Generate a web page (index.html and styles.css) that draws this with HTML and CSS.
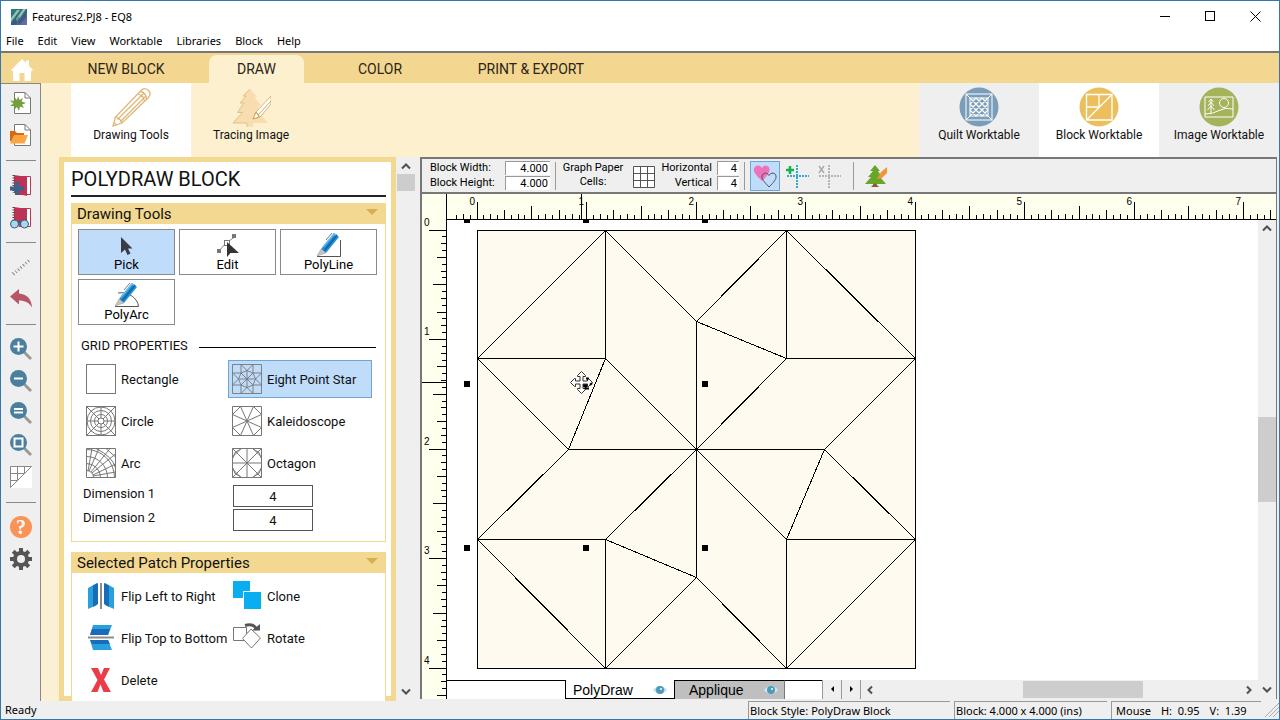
FILE: index.html
```html
<!DOCTYPE html>
<html lang="en">
<head>
<meta charset="utf-8">
<title>Features2.PJ8 - EQ8</title>
<link rel="stylesheet" href="styles.css">
</head>
<body>
<div class="window">
  <header class="titlebar">
    <svg class="app-icon" width="16" height="16" viewBox="0 0 16 16">
      <defs><linearGradient id="appg" x1="0" y1="0" x2="1" y2="1"><stop offset="0" stop-color="#2a7f86"/><stop offset=".5" stop-color="#35628c"/><stop offset="1" stop-color="#7a70ac"/></linearGradient></defs>
      <rect width="16" height="16" fill="url(#appg)"/>
      <path d="M0 9L6 1H9L0 13ZM5 10L12 0H15L6 13Z" fill="#8fc9a0"/>
      <path d="M1 16L8 7L9 11L15 3V8L8 16L7 12L4 16Z" fill="#2f5078" opacity=".5"/>
    </svg>
    <span class="title">Features2.PJ8 - EQ8</span>
    <div class="window-buttons">
      <button aria-label="Minimize"><svg width="11" height="11"><path d="M0 5.500H10" stroke="#000" fill="none"/></svg></button>
      <button aria-label="Maximize"><svg width="11" height="11"><rect x=".5" y=".5" width="9" height="9" stroke="#000" fill="none"/></svg></button>
      <button aria-label="Close"><svg width="11" height="11"><path d="M.5 .5L10.500 10.500M10.500 .5L.5 10.500" stroke="#000" fill="none"/></svg></button>
    </div>
  </header>
  <nav class="menubar">
    <button>File</button><button>Edit</button><button>View</button><button>Worktable</button><button>Libraries</button><button>Block</button><button>Help</button>
  </nav>
  <nav class="tabstrip">
    <button class="home" aria-label="Home"><svg width="22" height="22" viewBox="0 0 22 22"><path d="M11 0L15 4V1.500H18V7L22 11L20 12.500V22H13.500V14H8.500V22H2V12.500L0 11Z" fill="#fff"/></svg></button>
    <button class="tab tab-new">NEW BLOCK</button>
    <button class="tab tab-draw active">DRAW</button>
    <button class="tab tab-color">COLOR</button>
    <button class="tab tab-print">PRINT &amp; EXPORT</button>
  </nav>
  <div class="workspace">
    <aside class="sidebar">
      <button aria-label="New project"><svg width="22" height="24" viewBox="0 0 22 24"><path d="M4.500 1.500H15L20.500 7V22.500H4.500Z" fill="#fff" stroke="#777"/><path d="M15 1.500V7H20.500" fill="none" stroke="#777"/><path d="M8 5L9.500 9L13 7L11.500 10.500L16 12L12 13.500L14 17L10 15.500L9 20L7 16L4 19L4.500 15L0 15L3.500 12.500L0 9.500L4.500 10L4.500 6L7 9Z" fill="#72a03c"/></svg></button>
      <button aria-label="Open project"><svg width="22" height="24" viewBox="0 0 22 24"><path d="M4.500 1.500H15L20.500 7V22.500H4.500Z" fill="#fff" stroke="#777"/><path d="M15 1.500V7H20.500" fill="none" stroke="#777"/><path d="M0 8H5L7 10H14V18H0Z" fill="#d9690f"/><path d="M4 12H18L14.500 20.500H0Z" fill="#f9a541"/></svg></button>
      <hr>
      <button aria-label="Add to library"><svg width="22" height="24" viewBox="0 0 22 24"><path d="M9 3.500H20.500V21.500H9Z" fill="#fff" stroke="#bd3355"/><path d="M4 2L17 4V23L4 20Z" fill="#bd3355"/><path d="M3.500 2V20" stroke="#444" stroke-dasharray="1 1.500" stroke-width="2"/><path d="M5 9H9V13.500H14V17.500H9V22H5V17.500H0V13.500H5Z" fill="#38638f"/></svg></button>
      <button aria-label="View library"><svg width="22" height="24" viewBox="0 0 22 24"><path d="M9 3.500H20.500V21.500H9Z" fill="#fff" stroke="#bd3355"/><path d="M4 2L17 4V22L4 20Z" fill="#bd3355"/><path d="M3.500 2V16" stroke="#444" stroke-dasharray="1 1.500" stroke-width="2"/><circle cx="4.500" cy="19" r="4" fill="#a9d8ee" stroke="#36617f"/><circle cx="14.500" cy="19" r="4" fill="#a9d8ee" stroke="#36617f"/><path d="M8 17H11" stroke="#36617f" stroke-width="2"/></svg></button>
      <hr>
      <button aria-label="Ruler"><svg width="22" height="22" viewBox="0 0 22 22"><path d="M3 18L20 3" stroke="#888" stroke-width="4" stroke-dasharray="1 2.300" fill="none"/><path d="M2 15.500L19 1" stroke="#efefef" stroke-width="2.500"/></svg></button>
      <button aria-label="Undo"><svg width="22" height="22" viewBox="0 0 22 22"><path d="M0 8.500L9 1V5.500C17 6 21.500 11 22 19.500C19 14.500 15 12.500 9 12.500V16.500Z" fill="#b95569"/></svg></button>
      <hr>
      <button aria-label="Zoom in"><svg width="22" height="24" viewBox="0 0 22 24"><path d="M13 14L21 22" stroke="#999" stroke-width="3"/><circle cx="8.500" cy="9.500" r="8.500" fill="#4b7f9e"/><path d="M8.500 4.500V14.500M3.500 9.500H13.500" stroke="#fff" stroke-width="2"/></svg></button>
      <button aria-label="Zoom out"><svg width="22" height="24" viewBox="0 0 22 24"><path d="M13 14L21 22" stroke="#999" stroke-width="3"/><circle cx="8.500" cy="9.500" r="8.500" fill="#4b7f9e"/><path d="M4 9.500H13" stroke="#fff" stroke-width="2"/></svg></button>
      <button aria-label="Refresh zoom"><svg width="22" height="24" viewBox="0 0 22 24"><path d="M13 14L21 22" stroke="#999" stroke-width="3"/><circle cx="8.500" cy="9.500" r="8.500" fill="#4b7f9e"/><path d="M4 8H13M4 11.500H13" stroke="#fff" stroke-width="2"/></svg></button>
      <button aria-label="Fit to window"><svg width="22" height="24" viewBox="0 0 22 24"><path d="M13 14L21 22" stroke="#999" stroke-width="3"/><circle cx="8.500" cy="9.500" r="8.500" fill="#4b7f9e"/><rect x="4.500" y="5.500" width="8" height="8" fill="#4b7f9e" stroke="#fff" stroke-width="2"/></svg></button>
      <button aria-label="Paper"><svg width="22" height="24" viewBox="0 0 22 24"><rect y="1" width="22" height="22" fill="#fff"/><path d="M.5 1.500H21.500L.5 22.500ZM7.500 1.500V15.500M14.500 1.500V8.500M.5 8.500H14.500M.5 15.500H7.500" fill="none" stroke="#888"/></svg></button>
      <hr>
      <button aria-label="Help"><svg width="22" height="24" viewBox="0 0 22 24"><circle cx="11" cy="12" r="11" fill="#fa9355"/><text x="11" y="19" class="help-mark">?</text></svg></button>
      <button aria-label="Settings"><svg width="22" height="24" viewBox="0 0 22 24"><g fill="#555"><rect x="9" y="1" width="4" height="22"/><rect x="9" y="1" width="4" height="22" transform="rotate(45 11 12)"/><rect x="9" y="1" width="4" height="22" transform="rotate(90 11 12)"/><rect x="9" y="1" width="4" height="22" transform="rotate(135 11 12)"/><circle cx="11" cy="12" r="8"/></g><circle cx="11" cy="12" r="4" fill="#efefef"/></svg></button>
    </aside>
    <div class="content">
      <div class="ribbon">
        <button class="ribbon-btn active"><svg width="40" height="40" viewBox="0 0 40 40" fill="none" stroke="#dcb777" stroke-width="1.300"><path d="M2 39L4.500 30L30 3.500Q33 0 37 3Q41 7 37 11L11 36ZM4.500 30Q6 29.500 7 32Q10 32 9.500 34.500Q11.500 34.500 11 36M7 32L32.500 6.500M9.500 34.500L35 9M26.500 7Q29 6.500 30 9Q32.500 9 33 13.500M29 4.500Q35 5 35.500 12.500M2 39L5.500 38L3 35.500Z"/></svg><span>Drawing Tools</span></button>
        <button class="ribbon-btn"><svg width="40" height="40" viewBox="0 0 40 40"><path d="M19 2L26 9.500L23.500 10.500L30 18.500L27 20L33 27L31 29L37 36H22V40H16V36H2L11.500 25.500H6.500L13 16H9L15 9H12Z" fill="#f8ddb0"/><path d="M19 2L12 9H15L9 16H13L6.500 25.500H11.500L2 36H16V40" fill="none" stroke="#dfc088"/><path d="M22 32L25 25L40 9V17L29 30Z" fill="#fff" stroke="#dcb777"/><path d="M25 25L29 30M27 28L40 14M22 32L25 25L28 30Z" fill="none" stroke="#cda968"/></svg><span>Tracing Image</span></button>
        <div class="spacer"></div>
        <button class="ribbon-btn grey"><svg width="40" height="40" viewBox="0 0 40 40"><circle cx="20" cy="20" r="19.500" fill="#7a9db9"/><g fill="none" stroke="#fff"><rect x="7" y="7" width="26" height="26"/><rect x="11" y="11" width="18" height="18"/><path d="M7 7L11 11M33 7L29 11M7 33L11 29M33 33L29 29"/><path stroke-width="1.300" d="M11 17L17 11M11 23L23 11M11 29L29 11M17 29L29 17M23 29L29 23M23 11L29 17M17 11L29 23M11 11L29 29M11 17L23 29M11 23L17 29"/></g></svg><span>Quilt Worktable</span></button>
        <button class="ribbon-btn active"><svg width="40" height="40" viewBox="0 0 40 40"><circle cx="20" cy="20" r="19.500" fill="#ebbf5e"/><path d="M7.500 7.500H33V33H7.500ZM7.500 33L33 7.500M7.500 20H20V7.500" fill="none" stroke="#fff" stroke-width="1.300"/></svg><span>Block Worktable</span></button>
        <button class="ribbon-btn grey"><svg width="40" height="40" viewBox="0 0 40 40"><circle cx="20" cy="20" r="19.500" fill="#a4b35c"/><path d="M6 10H34V30H6ZM6 27Q14 27 20 23.500T34 22M12 26V12M12 12L9.500 15M12 12L14.500 15M12 15L9 19M12 15L15 19M12 19L8.500 23M12 19L15.500 23" fill="none" stroke="#fff"/><circle cx="25" cy="16" r="4.500" fill="none" stroke="#fff"/></svg><span>Image Worktable</span></button>
      </div>
      <div class="body">
        <div class="gutter"></div>
        <section class="panel">
          <h1>POLYDRAW BLOCK</h1>
          <div class="group">
            <h2>Drawing Tools<svg width="12" height="7"><path d="M0 0H12L6 6Z" fill="#d8ae55"/></svg></h2>
            <div class="tools">
              <button class="tool active"><svg width="24" height="26" viewBox="0 0 24 26"><path d="M6 6V22L10 18.500L12.500 24L15.500 22.500L13 17.500H17.500Z" fill="#3b3b44"/></svg><span>Pick</span></button>
              <button class="tool"><svg width="24" height="26" viewBox="0 0 24 26"><path d="M3 20L10 12L20 5" stroke="#888" fill="none"/><rect x="1" y="18" width="4" height="4" fill="#777"/><rect x="16" y="3" width="4" height="4" fill="#777"/><rect x="8.500" y="9.500" width="5" height="5" fill="#fff" stroke="#777"/><path d="M11 11V26L14.500 22H23Z" fill="#333"/></svg><span>Edit</span></button>
              <button class="tool"><svg width="26" height="26" viewBox="0 0 26 26"><path d="M1 25.500H24.500V9" stroke="#555" fill="none"/><path d="M5 18L18 2L23 6L10 22Z" fill="#2793d6"/><path d="M8 20L21 4" stroke="#126ba8" stroke-width="2"/><path d="M7 16L18 3L20 4" stroke="#66bdf0" stroke-width="1.500" fill="none"/><path d="M1 25L5 18L10 22Z" fill="#c3c3c8" stroke="#999" stroke-width=".5"/><path d="M10 9L16 2" stroke="#777"/></svg><span>PolyLine</span></button>
              <button class="tool"><svg width="26" height="26" viewBox="0 0 26 26"><path d="M1 25.500H24.500C24 18 15 10 4 12" stroke="#555" fill="none"/><path d="M5 18L18 2L23 6L10 22Z" fill="#2793d6"/><path d="M8 20L21 4" stroke="#126ba8" stroke-width="2"/><path d="M7 16L18 3L20 4" stroke="#66bdf0" stroke-width="1.500" fill="none"/><path d="M1 25L5 18L10 22Z" fill="#c3c3c8" stroke="#999" stroke-width=".5"/><path d="M10 9L16 2" stroke="#777"/></svg><span>PolyArc</span></button>
            </div>
            <h3>GRID PROPERTIES</h3>
            <div class="options">
              <button class="option"><svg width="30" height="30" viewBox="0 0 30 30"><rect x=".5" y=".5" width="29" height="29"/></svg>Rectangle</button>
              <button class="option active"><svg width="30" height="30" viewBox="0 0 30 30"><path d="M.5 .5H29.500V29.500H.5ZM.5 9H9V.5L15 6.500L21 .5V9H29.500L23.500 15L29.500 21H21V29.500L15 23.500L9 29.500V21H.5L6.500 15L.5 9M9 9L21 21M21 9L9 21M15 6.500V23.500M6.500 15H23.500M9 9L15 15L21 9M15 6.500L9 9M15 6.500L21 9M23.500 15L21 9M23.500 15L21 21M15 23.500L21 21M15 23.500L9 21M6.500 15L9 21M6.500 15L9 9" stroke-width=".9"/></svg>Eight Point Star</button>
              <button class="option"><svg width="30" height="30" viewBox="0 0 30 30"><rect x=".5" y=".5" width="29" height="29"/><circle cx="15" cy="15" r="3"/><circle cx="15" cy="15" r="6.500"/><circle cx="15" cy="15" r="10.500"/><circle cx="15" cy="15" r="14"/><path d="M15 1V12M15 18V29M1 15H12M18 15H29M.5 .5L13 13M17 17L29.500 29.500M29.500 .5L17 13M13 17L.5 29.500"/></svg>Circle</button>
              <button class="option"><svg width="30" height="30" viewBox="0 0 30 30"><path d="M.5 .5H29.500V29.500H.5ZM8.500 .5L21.500 29.500M21.500 .5L8.500 29.500M.5 8.500L29.500 21.500M29.500 8.500L.5 21.500M8.500 .5L.5 8.500M21.500 .5L29.500 8.500M.5 21.500L8.500 29.500M29.500 21.500L21.500 29.500"/></svg>Kaleidoscope</button>
              <button class="option"><svg width="30" height="30" viewBox="0 0 30 30"><path d="M.5 .5H29.500V29.500H.5ZM.5 22.500A7 7 0 0 1 7.500 29.500M.5 15.500A14 14 0 0 1 14.500 29.500M.5 8.500A21 21 0 0 1 21.500 29.500M.5 1.500A28 28 0 0 1 28.500 29.500M10 .5Q27 9 29.500 20M20 .5L29.500 9M2 23L6 .5M3 23L13 .5M5 24L24 .5M6 25L29.500 6M7 27L29.500 16M7 28L29.500 24"/></svg>Arc</button>
              <button class="option"><svg width="30" height="30" viewBox="0 0 30 30"><path d="M.5 .5H29.500V29.500H.5ZM9 .5L.5 9V21L9 29.500H21L29.500 21V9L21 .5M.5 .5L29.500 29.500M29.500 .5L.5 29.500M15 .5V29.500M.5 15H29.500M9 1L3 4.500L1 10M21 1L27 4.500L29 10M9 29L3 25.500L1 20M21 29L27 25.500L29 20"/></svg>Octagon</button>
            </div>
            <div class="dims">
              <label for="dim1">Dimension 1</label><input id="dim1" value="4">
              <label for="dim2">Dimension 2</label><input id="dim2" value="4">
            </div>
          </div>
          <div class="group">
            <h2>Selected Patch Properties<svg width="12" height="7"><path d="M0 0H12L6 6Z" fill="#d8ae55"/></svg></h2>
            <div class="options patch">
              <button class="option"><svg class="solid" width="30" height="30" viewBox="0 0 30 30"><path d="M2 7L11 2V24L2 28ZM28 7L19 2V24L28 28Z" fill="#27a0dc"/><path d="M7 4.500L12 2V23L7 26ZM23 4.500L18 2V23L23 26Z" fill="#1b6cb8"/><path d="M15 2V28" stroke="#8c8c8c" stroke-width="2"/></svg>Flip Left to Right</button>
              <button class="option"><svg class="solid" width="30" height="30" viewBox="0 0 30 30"><path d="M1 0H18V17H1ZM12 11H29V28H12Z" fill="#09aef1"/><path d="M11.500 17V10.500H18" stroke="#fff" fill="none"/></svg>Clone</button>
              <button class="option"><svg class="solid" width="30" height="30" viewBox="0 0 30 30"><path d="M7 2H26L22 12H4ZM4 17H22L26 27H7Z" fill="#27a0dc"/><path d="M6 6H24L22 12H4ZM4 17H22L24 21H6Z" fill="#1b6cb8"/><path d="M2 14.500H28" stroke="#8c8c8c" stroke-width="2"/></svg>Flip Top to Bottom</button>
              <button class="option"><svg class="solid" width="30" height="30" viewBox="0 0 30 30"><path d="M1.500 4.500H14.500V17.500H1.500Z" fill="#fff" stroke="#777"/><path d="M19 6L28.500 15L19.500 25L10.500 15.500Z" fill="#fff" stroke="#777"/><path d="M13 2.500Q22 0 25 7" stroke="#555" stroke-width="3" fill="none"/><path d="M20 7.500H28V1Z" fill="#555"/></svg>Rotate</button>
              <button class="option"><svg class="solid" width="30" height="30" viewBox="0 0 30 30"><path d="M5 3H12L15 10L18 3H24L18 14.500L25 27H17.500L14.500 19.500L11.500 27H5L11.500 15Z" fill="#ea3c49"/></svg>Delete</button>
            </div>
          </div>
        </section>
        <div class="vscroll panel-scroll">
          <svg width="18" height="16"><path d="M5 10.500L9 6.500L13 10.500" class="chev"/></svg>
          <div class="thumb"></div>
          <div class="spacer"></div>
          <svg width="18" height="16"><path d="M5 6.500L9 10.500L13 6.500" class="chev"/></svg>
        </div>
        <main class="main">
          <div class="propbar">
            <div class="sizes">
              <label for="bw">Block Width:</label><input id="bw" value="4.000">
              <label for="bh">Block Height:</label><input id="bh" value="4.000">
            </div>
            <i class="sep"></i>
            <div class="cells-label">Graph Paper<br>Cells:</div>
            <svg class="grid-icon" width="22" height="22" viewBox="0 0 22 22"><path d="M.5 .5H21.500V21.500H.5ZM7.500 .5V21.500M14.500 .5V21.500M.5 7.500H21.500M.5 14.500H21.500" fill="#fff" stroke="#555"/></svg>
            <div class="sizes cells">
              <label for="ch">Horizontal</label><input id="ch" value="4">
              <label for="cv">Vertical</label><input id="cv" value="4">
            </div>
            <i class="sep"></i>
            <button class="pb active" aria-label="Snap to nodes"><svg width="26" height="26" viewBox="0 0 26 26"><path d="M10 18C4 12 1 9 2 5.500C3 2 8 1 10 5C12 1 17 2 17.500 6C18 9 15 13 10 18Z" fill="#ee72bd"/><path d="M17 24C12 18.500 9.500 16 10 13C11 9.500 15 9 17 12.500C19 9 23.500 9.500 24 13C24.500 16 22 19 17 24Z" fill="none" stroke="#555"/></svg></button>
            <button class="pb" aria-label="Add guide"><svg width="26" height="26" viewBox="0 0 26 26"><path d="M2 7H10M6 3V11" stroke="#18b04c" stroke-width="2.500"/><path d="M13 2V25M3 13H25" stroke="#36aacb" stroke-width="2" stroke-dasharray="2 1"/></svg></button>
            <button class="pb" aria-label="Clear guides"><svg width="26" height="26" viewBox="0 0 26 26"><path d="M3 3L8 10M8 3L3 10" stroke="#aaa" stroke-width="1.500"/><path d="M13 2V25M3 13H25" stroke="#b5b5b5" stroke-width="2" stroke-dasharray="2 1"/></svg></button>
            <i class="sep sep-wide"></i>
            <button class="pb" aria-label="Tracing image"><svg width="26" height="26" viewBox="0 0 26 26"><path d="M12 2L17 8H15L19 14H17L23 21H14V24H10V21H2L8 14H5L10 8H7Z" fill="#6aa52b"/><path d="M8 24L12 20L16 24Z" fill="#8b5a2b"/><path d="M14 16L18 9L24 4V10L19 15Z" fill="#f69433"/></svg></button>
          </div>
          <div class="stage">
            <svg class="ruler-top" id="rulerTop"></svg>
            <svg class="ruler-left" id="rulerLeft"></svg>
            <svg class="canvas">
              <g transform="translate(30.500 10.500)" class="block">
                <rect width="438" height="438"/>
                <path d="M0 128L128 0V128H0L91 219L128 128L219 219H91L0 309H128L219 219M128 0L219 91L309 0V128H438L309 0M219 91L309 128L219 219V91M438 128L347 219H219L309 309L347 219L438 309H309V438L438 309M219 219V347L128 309V438L0 309M128 438L219 347L309 438"/>
              </g>
              <g class="handles">
                <rect x="17" y="-3" width="6" height="6"/><rect x="136" y="-3" width="6" height="6"/><rect x="255" y="-3" width="6" height="6"/>
                <rect x="17" y="161" width="6" height="6"/><rect x="136" y="161" width="6" height="6"/><rect x="255" y="161" width="6" height="6"/>
                <rect x="17" y="325" width="6" height="6"/><rect x="136" y="325" width="6" height="6"/><rect x="255" y="325" width="6" height="6"/>
              </g>
              <path transform="translate(134.500 162.500)" d="M0 -11L4 -7V-6H1.500V-1.500H6V-4H7L11 0L7 4H6V1.500H1.500V6H4V7L0 11L-4 7V6H-1.500V1.500H-6V4H-7L-11 0L-7 -4H-6V-1.500H-1.500V-6H-4V-7Z" fill="#fff" stroke="#333"/>
              <path d="M138.500 165V168.500H142M139 158.500H142M143 165L145 163" fill="none" stroke="#000" stroke-width="2"/>
            </svg>
            <div class="vscroll canvas-scroll">
              <svg width="18" height="16"><path d="M5 10.500L9 6.500L13 10.500" class="chev"/></svg>
              <div class="before"></div><div class="thumb"></div><div class="after"></div>
              <svg width="18" height="16"><path d="M5 4.500L9 8.500L13 4.500" class="chev"/></svg>
            </div>
            <div class="sheets">
              <div class="sheet-lead"></div>
              <button class="sheet active">PolyDraw<svg width="14" height="10" viewBox="0 0 14 10"><path d="M0 5Q7 -3 14 5Q7 13 0 5Z" fill="#b9dbea"/><circle cx="7" cy="5" r="4" fill="#4b9bbd"/><circle cx="8" cy="4" r="1" fill="#fff"/></svg></button>
              <button class="sheet">Applique<svg width="14" height="10" viewBox="0 0 14 10"><path d="M0 5Q7 -3 14 5Q7 13 0 5Z" fill="#d2e6ef"/><circle cx="7" cy="5" r="4" fill="#4b9bbd"/><circle cx="8" cy="4" r="1" fill="#fff"/></svg></button>
              <div class="sheet-tail"></div>
              <button class="nudge" aria-label="Previous"><svg width="5" height="7"><path d="M4 0V6L1 3Z"/></svg></button>
              <button class="nudge" aria-label="Next"><svg width="5" height="7"><path d="M1 0V6L4 3Z"/></svg></button>
              <div class="hscroll">
                <svg width="18" height="18"><path d="M11 5.500L7.500 9L11 12.500" class="chev"/></svg>
                <div class="before"></div><div class="thumb"></div><div class="after"></div>
                <svg width="18" height="18"><path d="M7 5.500L10.500 9L7 12.500" class="chev"/></svg>
              </div>
            </div>
          </div>
        </main>
      </div>
    </div>
  </div>
  <footer class="statusbar">
    <span class="ready">Ready</span>
    <span class="cell cell-style">Block Style: PolyDraw Block</span>
    <span class="cell cell-block">Block: 4.000 x 4.000 (ins)</span>
    <span class="cell cell-mouse"><span>Mouse</span><span>H:&nbsp; 0.95</span><span>V:&nbsp; 1.39</span></span>
    <svg class="grip" width="16" height="16"><path d="M2 16L16 2M6 16L16 6M10 16L16 10" stroke="#aaa" fill="none"/></svg>
  </footer>
</div>
<script src="rulers.js"></script>
</body>
</html>
```
FILE: styles.css
```css
* { box-sizing: border-box; }
body { margin: 0; font-family: Roboto, "Liberation Sans", sans-serif; font-size: 13px; color: #111; background: #fff; }
button { margin: 0; padding: 0; border: 0; background: none; font: inherit; color: inherit; display: flex; align-items: center; justify-content: center; white-space: nowrap; }
input { font: inherit; color: inherit; margin: 0; border-radius: 0; min-width: 0; }
svg { display: block; flex: none; }
.spacer { flex: 1; }

.window { height: 100vh; display: flex; flex-direction: column; border: 1px solid #3577ad; background: #fff; overflow: hidden; }
.titlebar { display: flex; align-items: center; height: 31px; flex: none; padding-left: 10px; font: 11px "Noto Sans", sans-serif; color: #000; }
.title { margin-left: 5px; flex: 1; }
.window-buttons { display: flex; margin-right: 1px; }
.window-buttons button { width: 45px; height: 30px; }
.menubar { display: flex; gap: 14px; height: 21px; flex: none; padding: 0 5px 2px; border-bottom: 2px solid #777; font: 11px "Noto Sans", sans-serif; color: #000; }

.tabstrip { display: flex; height: 30px; background: #f3d791; font-size: 14px; padding-left: 10px; flex: none; }
.home { width: 22px; padding-top: 4px; }
.tab { height: 28px; align-self: flex-end; color: #2b2517; }
.tab-new { width: 156px; margin-left: 15px; }
.tab-draw { width: 95px; margin-left: 5px; }
.tab-color { width: 88px; margin-left: 32px; }
.tab-print { width: 150px; margin-left: 32px; }
.tab.active { background: #fdf0cf; border-radius: 8px 8px 0 0; }

.workspace { flex: 1; display: flex; min-height: 0; }
.sidebar { width: 40px; flex: none; background: #efefef; border-right: 1px solid #888; border-top: 1px solid #888; display: flex; flex-direction: column; align-items: center; gap: 8px; padding-top: 7px; }
.sidebar button { height: 24px; }
.sidebar hr { width: 30px; height: 1px; border: 0; background: #888; margin: 5px 0 4px; flex: none; }
.help-mark { font: bold 20px "Liberation Serif", serif; fill: #fff; text-anchor: middle; }
.content { flex: 1; display: flex; flex-direction: column; min-width: 0; }

.ribbon { display: flex; height: 74px; background: #fdf0cf; padding-left: 30px; flex: none; font-size: 12px; }
.ribbon-btn { width: 120px; flex-direction: column; justify-content: flex-start; padding: 4px 0; }
.ribbon-btn span { line-height: 16px; }
.ribbon-btn.active { background: #fff; }
.ribbon-btn.grey { background: #efefef; }

.body { flex: 1; display: flex; min-height: 0; background: #efefef; }
.gutter { width: 18px; background: #fcf0d3; flex: none; }
.panel { width: 337px; flex: none; background: linear-gradient(#f3d891, #f3d891) bottom / 100% 5px no-repeat #fff; border: 5px solid #f3d891; border-bottom: 0; padding: 0 5px 0 7px; overflow: hidden; display: flex; flex-direction: column; }
.panel h1 { margin: 0; font-size: 20px; font-weight: 400; line-height: 31px; border-bottom: 2px solid #222; padding-top: 2px; flex: none; }
.group { flex: none; margin-top: 6px; border: 1px solid #f3d891; background: #fff; }
.group + .group { margin-top: 10px; }
.group h2 { margin: 0; background: #f3d891; font-size: 15px; font-weight: 400; line-height: 21px; height: 20px; padding: 0 7px 0 5px; display: flex; justify-content: space-between; }
.group h2 svg { margin-top: 5px; }
.tools { display: flex; flex-wrap: wrap; gap: 4px; padding: 5px 6px 6px; }
.tool { width: 97px; height: 46px; border: 1px solid #8a8a8a; background: #fff; flex-direction: column; justify-content: flex-end; padding-bottom: 2px; color: #000; }
.tool span { line-height: 15px; }
.tool.active { background: #bfddfb; }
.panel h3 { display: flex; align-items: center; gap: 11px; margin: 7px 9px 7px; font-size: 13px; font-weight: 400; line-height: 15px; }
.panel h3::after { content: ""; flex: 1; height: 1px; background: #000; margin-top: 3px; }
.options { display: grid; grid-template-columns: 144px 144px; gap: 4px 2px; padding-left: 10px; }
.option { height: 38px; justify-content: flex-start; gap: 5px; padding-left: 3px; border: 1px solid transparent; }
.option.active { background: #bfddfb; border-color: #6fa5cf; }
.option svg:not(.solid) { fill: none; stroke: #777; }
.patch { padding-top: 4px; padding-bottom: 10px; }
.dims { display: grid; grid-template-columns: 150px 80px; gap: 2px 0; padding: 3px 11px 10px; }
.dims label { line-height: 17px; }
.dims input { height: 22px; border: 1px solid #555; text-align: center; background: #fff; }

.vscroll { width: 18px; flex: none; display: flex; flex-direction: column; background: #efefef; margin-left: 1px; }
.vscroll .thumb, .hscroll .thumb { background: #cdcdcd; }
.chev { fill: none; stroke: #505050; stroke-width: 2; }
.panel-scroll { margin-right: 5px; padding: 1px 0 2px; }
.panel-scroll .thumb { height: 17px; }

.main { flex: 1; min-width: 0; display: flex; flex-direction: column; border: 2px solid #777; border-right-width: 1px; border-bottom: 0; margin: 0 2px 2px 0; }
.propbar { display: flex; align-items: center; height: 35px; flex: none; border-bottom: 2px solid #777; background: #efefef; padding-left: 8px; font-size: 11px; color: #000; }
.sizes { display: grid; grid-template-columns: 75px 45px; row-gap: 1px; line-height: 14px; }
.sizes input { height: 14px; border: 0; border-left: 1px solid #999; border-top: 1px solid #999; background: #fff; text-align: right; padding: 0 2px; }
.sizes.cells { grid-template-columns: 51px 22px; column-gap: 5px; text-align: right; }
.sep { width: 1px; height: 28px; background: #999; margin: 0 5px; flex: none; }
.sep-wide { margin: 0 7px; }
.cells-label { text-align: center; line-height: 14px; width: 64px; height: 30px; white-space: nowrap; flex: none; }
.grid-icon { margin: 3px 6px 0 8px; }
.pb { width: 30px; height: 30px; margin-right: 2px; flex: none; }
.pb.active { background: #bfddfb; border: 1px solid #6fa5cf; }

.stage { flex: 1; min-height: 0; display: grid; grid-template-columns: 25px minmax(0, 1fr) 18px; grid-template-rows: 26px minmax(0, 1fr) 19px; }
.ruler-top { grid-column: 1 / 4; grid-row: 1; width: 100%; height: 100%; background: #ffffee; }
.ruler-left { grid-column: 1; grid-row: 2 / 4; width: 100%; height: 100%; background: #ffffee; overflow: visible; }
.tick { stroke: #000; fill: none; shape-rendering: crispEdges; }
.num { font: 10px "Liberation Sans", sans-serif; fill: #000; }
.canvas { grid-column: 2; grid-row: 2; width: 100%; height: 100%; background: #fff; }
.block { stroke: #000; fill: none; shape-rendering: crispEdges; }
.block rect { fill: #fffaf0; }
.canvas-scroll { grid-column: 3; grid-row: 2 / 4; margin: 0; }
.canvas-scroll .before { flex: 181; }
.canvas-scroll .thumb { flex: 84; }
.canvas-scroll .after { flex: 181; }
.sheets { grid-column: 2; grid-row: 3; display: flex; background: #fff; font: 14px "Liberation Sans", sans-serif; color: #000; }
.sheet-lead { width: 118px; border-top: 1px solid #000; }
.sheet-tail { width: 37px; border-top: 1px solid #000; }
.sheet { width: 110px; gap: 20px; background: #bfbfbf; border-top: 1px solid #000; border-right: 1px solid #777; justify-content: flex-start; padding-left: 14px; }
.sheet.active { background: #fff; border: 1px solid #000; border-top: 0; padding: 1px 0 0 7px; }
.nudge { width: 19px; background: #efefef; border-left: 1px solid #999; }
.hscroll { flex: 1; display: flex; align-items: center; background: #efefef; border-left: 1px solid #999; }
.hscroll .thumb { flex: 120; height: 17px; }
.hscroll .before { flex: 144; }
.hscroll .after { flex: 97; }

.statusbar { display: flex; height: 18px; flex: none; background: #efefef; font: 11px/18px "Noto Sans", sans-serif; color: #000; padding-left: 4px; }
.ready { flex: 1; }
.cell { border-top: 1px solid #999; border-left: 1px solid #999; padding-left: 1px; margin-right: 4px; white-space: nowrap; }
.cell-style { width: 202px; }
.cell-block { width: 153px; }
.cell-mouse { width: 150px; display: flex; gap: 10px; padding-left: 4px; margin-right: 2px; }
```
FILE: rulers.js
```js
// Draws the inch rulers: 16 divisions per inch, numbered at whole inches.
const NS = "http://www.w3.org/2000/svg";
const INCH = 109.5;

function add(svg, name, attrs, text) {
  const el = document.createElementNS(NS, name);
  for (const key in attrs) el.setAttribute(key, attrs[key]);
  if (text !== undefined) el.textContent = text;
  svg.appendChild(el);
}

function tickLength(i) {
  if (i % 16 === 0) return 18;
  if (i % 8 === 0) return 14;
  if (i % 4 === 0) return 10;
  return i % 2 === 0 ? 6 : 5;
}

const topRuler = document.getElementById("rulerTop");
const leftRuler = document.getElementById("rulerLeft");
const width = topRuler.getBoundingClientRect().width;
const height = leftRuler.getBoundingClientRect().height;

let d = `M25 25.5H${width}M24.500 0V26M159.500 0V26`;
for (let i = -3; 55 + i * INCH / 16 < width; i++) {
  const x = Math.floor(55 + i * INCH / 16) + 0.5;
  d += `M${x} 26V${26 - tickLength(i)}`;
  if (i % 16 === 0) add(topRuler, "text", { x: x - 8, y: 11, class: "num" }, i / 16);
}
add(topRuler, "path", { d, class: "tick" });

d = `M24.500 0V${height}M0 162.500H25`;
for (let i = 0; 10 + i * INCH / 16 < height; i++) {
  const y = Math.floor(10 + i * INCH / 16) + 0.5;
  d += `M25 ${y}H${25 - tickLength(i)}`;
  if (i % 16 === 0) add(leftRuler, "text", { x: 2, y: y - 5, class: "num" }, i / 16);
}
add(leftRuler, "path", { d, class: "tick" });
```
